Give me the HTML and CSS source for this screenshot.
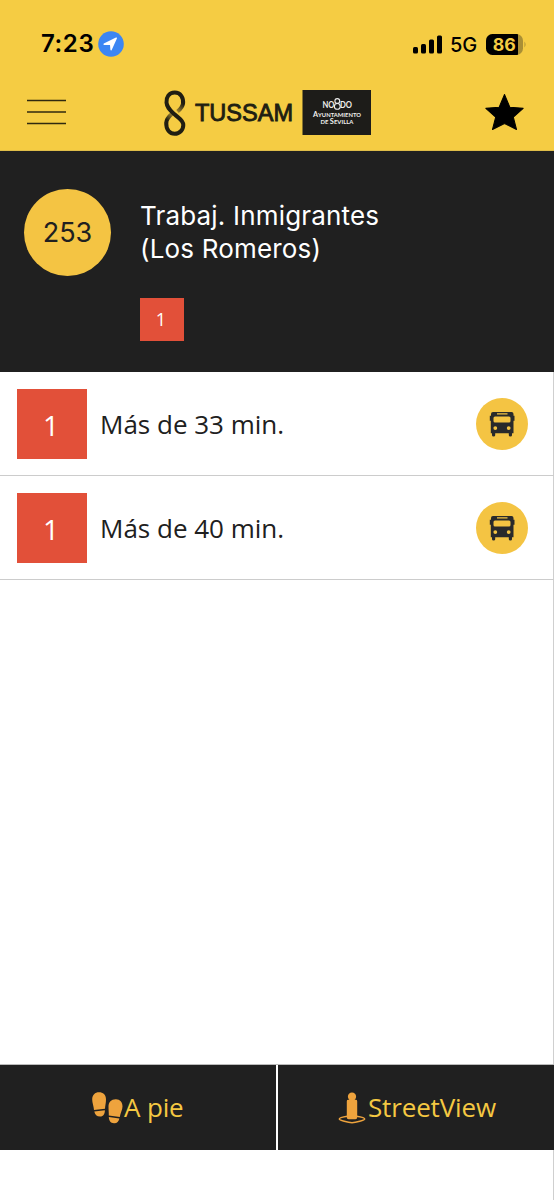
FILE: index.html
```html
<!DOCTYPE html>
<html lang="es">
<head>
<meta charset="utf-8">
<title>TUSSAM</title>
<link rel="stylesheet" href="styles.css">
</head>
<body>
<svg class="defs" width="0" height="0" aria-hidden="true">
  <symbol id="bus" viewBox="0 0 52 52">
    <path fill="#292a2b" fill-rule="evenodd" d="M17 14h18.500q2 0 2 2v1.800h1v5h-1v12.400h-1.500v2q0 1.200-1.600 1.200t-1.600-1.200v-2H19.200v2q0 1.200-1.600 1.200t-1.600-1.200v-2h-1.200V22.800h-1v-5h1.200v-1.800q0-2 2-2zM21 15.200v1.300h10.500v-1.300zM19 18.500q-1.500 0-1.500 1.500v3q0 1.500 1.500 1.500h14q1.500 0 1.500-1.500v-3q0-1.500-1.500-1.500zM19.300 28.200a1.900 1.900 0 1 0 0 3.800 1.900 1.900 0 0 0 0-3.800zM32.700 28.200a1.900 1.900 0 1 0 0 3.800 1.900 1.900 0 0 0 0-3.800z"/>
  </symbol>
</svg>
<main class="screen">
  <header class="top">
    <div class="status">
      <span class="time">7:23</span>
      <svg class="location" viewBox="0 0 26 26"><circle cx="13" cy="13" r="12.800" fill="#3c86f3"/><path d="M5.800 12.500L18 6.600q1.300-.4.900.9L13.700 19q-.8 1.200-1.300-.2l-.4-4.700-5.900-.2q-1.500-.5-.3-1.400z" fill="#fff"/></svg>
      <svg class="signal" viewBox="0 0 30 19"><rect x="0" y="12" width="5" height="6.500" rx="1.500"/><rect x="8" y="9" width="5" height="9.500" rx="1.500"/><rect x="16" y="4.500" width="5" height="14" rx="1.500"/><rect x="24" y=".5" width="5" height="18" rx="1.500"/></svg>
      <span class="network">5G</span>
      <svg class="battery" viewBox="0 0 41 21"><defs><clipPath id="cell"><rect width="37" height="21" rx="6.500"/></clipPath></defs><g clip-path="url(#cell)"><rect width="37" height="21" fill="#a98f35"/><rect width="32" height="21"/></g><path d="M38.500 7.500q2 3 0 6z" fill="#a98f35"/><text x="18.200" y="16.500" text-anchor="middle" textLength="23" lengthAdjust="spacingAndGlyphs">86</text></svg>
    </div>
    <nav class="bar">
      <svg class="menu" viewBox="0 0 39 26"><path d="M0 1.500h39M0 13h39M0 24.500h39" stroke="#30290f" stroke-width="1.600"/></svg>
      <svg class="brand" viewBox="0 0 209 47">
        <defs>
          <linearGradient id="fade-top" gradientUnits="userSpaceOnUse" x1="20" y1="14" x2="14" y2="22"><stop offset="0" stop-color="#201e12"/><stop offset="1" stop-color="#a98d34"/></linearGradient>
          <linearGradient id="fade-bottom" gradientUnits="userSpaceOnUse" x1="4" y1="30" x2="9" y2="23"><stop offset="0" stop-color="#201e12"/><stop offset="1" stop-color="#a98d34"/></linearGradient>
        </defs>
        <g fill="none" stroke="#201e12" stroke-width="4">
          <path d="M20 13.500q-.5 4-5.500 8" stroke="url(#fade-top)"/>
          <path d="M3.200 33q.3-4.500 5.500-9" stroke="url(#fade-bottom)"/>
          <path d="M20 14C20.800 7.500 17.500 2.500 11.700 2.500S3 7.500 3.500 12.500C4 18 7 20 11.500 24.300S20.300 30 20.300 35c0 5-3.800 8.800-8.600 8.800S3 40 3.200 32.500"/>
        </g>
        <text class="wordmark" x="32" y="31.300" textLength="98" lengthAdjust="spacingAndGlyphs">TUSSAM</text>
        <rect x="139.500" y="0" width="68.500" height="45" fill="#1d1c19"/>
        <g class="council"><text x="159.500" y="17.600" font-size="8.600" textLength="12" lengthAdjust="spacingAndGlyphs">NO</text><text x="177" y="17.600" font-size="8.600" textLength="12" lengthAdjust="spacingAndGlyphs">DO</text>
        <text x="150" y="27.300" textLength="48" lengthAdjust="spacingAndGlyphs"><tspan font-size="8">A</tspan><tspan font-size="6.400">YUNTAMIENTO</tspan></text>
        <text x="157.500" y="34.300" textLength="33" lengthAdjust="spacingAndGlyphs"><tspan font-size="6.400">DE </tspan><tspan font-size="8">S</tspan><tspan font-size="6.400">EVILLA</tspan></text></g>
        <g fill="none" stroke="#eee" stroke-width="1.100"><circle cx="174.300" cy="11" r="2.400"/><circle cx="174.300" cy="16.400" r="2.900"/></g>
      </svg>
      <svg class="star" viewBox="0 0 38 37"><path d="M19 1.500l5.200 12.300 13 1.100-9.600 8.700 3.100 11.900L19 29.800 7.300 35.500l3.100-11.900L.8 14.900l13-1.100z" stroke="#000" stroke-linejoin="round"/></svg>
    </nav>
  </header>
  <section class="stop">
    <div class="stop-number">253</div>
    <div class="stop-info">
      <h1 class="stop-name">Trabaj. Inmigrantes<br>(Los Romeros)</h1>
      <span class="line line-small">1</span>
    </div>
  </section>
  <section class="arrivals">
    <div class="arrival"><span class="line">1</span><span class="wait">Más de 33 min.</span><svg class="bus" viewBox="0 0 52 52"><use href="#bus"/></svg></div>
    <div class="arrival"><span class="line">1</span><span class="wait">Más de 40 min.</span><svg class="bus" viewBox="0 0 52 52"><use href="#bus"/></svg></div>
  </section>
  <footer class="actions">
    <div class="action action-walk">
      <svg class="feet" viewBox="0 0 32 32"><g fill="#eea33d"><path d="M.2 7.500C.2 3 3 .3 7 .3s7 2.200 7 7.200c0 3.500-.8 6-1 9.300L2 18C1.700 14 .2 11 .2 7.500zM2.300 19.500l10.600-1.200c0 3.700-1.500 6.300-4.700 6.300-3.500 0-5.300-2-5.900-5.100z"/><path d="M30.500 14.500c0-4.500-2.500-7-6.500-7.200-4.500-.2-7.500 2.700-7.500 7.200 0 3.500.4 6 .3 9l11 1.500C28.300 21 30.500 18 30.500 14.500zM16.800 25l10.600 1.500c-.8 3.200-2.400 5-5.400 4.800-3.500-.2-5-2.500-5.200-6.300z"/></g></svg><span>A pie</span>
    </div>
    <div class="action action-street">
      <svg class="person" viewBox="0 0 28 32"><path d="M9.500 24.200Q1.300 25.500 1.300 27c0 1.300 9 3.700 12.700 3.700s12.700-2.400 12.700-3.700q0-1.500-8.200-2.800" fill="none" stroke="#eea33d" stroke-width="1.500"/><path d="M11.400 7.800a4.100 4.100 0 1 1 5.200 0h1.200q1.400 0 1.400 1.400V25.500q0 1.800-1.800 1.800h-6.800q-1.800 0-1.800-1.800V9.200q0-1.400 1.400-1.400z" fill="#eea33d"/></svg><span>StreetView</span>
    </div>
  </footer>
</main>
</body>
</html>
```
FILE: styles.css
```css
* { box-sizing: border-box; }
body { margin: 0; background: #fff; font-family: "Open Sans", sans-serif; }
svg { display: block; flex: none; }
.defs { position: absolute; }
.screen { display: flex; flex-direction: column; width: 554px; height: 1200px; padding-bottom: 50px; background: linear-gradient(to right, #fff 553px, #cfcfcf 553px); }
.top { height: 151px; background: #f5cc43; border-bottom: 1px solid #dfbd49; font-family: Inter, sans-serif; }
.status { display: flex; align-items: center; height: 88px; padding-left: 41px; }
.time { width: 57px; font-size: 24px; font-weight: 600; letter-spacing: .6px; line-height: 28px; }
.location { width: 26px; height: 26px; }
.signal { width: 30px; height: 19px; margin-left: 289px; }
.network { width: 29px; margin-left: 7px; margin-top: 1px; font-size: 20px; font-weight: 500; letter-spacing: -.1px; }
.battery { width: 41px; height: 21px; margin-left: 7px; }
.battery text { font: 700 17px Inter, sans-serif; fill: #f5cc43; }
.bar { display: flex; align-items: flex-start; padding-left: 27px; }
.menu { width: 39px; height: 26px; margin-top: 11px; }
.brand { width: 209px; height: 47px; margin-left: 97px; margin-top: 2px; }
.wordmark { font: 400 24.5px "Liberation Sans", sans-serif; fill: #201e12; stroke: #201e12; stroke-width: .9px; }
.council { font-family: Lato, sans-serif; font-weight: 700; fill: #f0f0ed; }
.star { width: 39px; height: 38px; margin-left: 113px; margin-top: 5px; }
.stop { display: flex; align-items: flex-start; height: 221px; padding: 38px 0 0 24px; background: #202020; color: #fff; font-family: Inter, sans-serif; }
.stop-number { width: 87px; height: 87px; border-radius: 50%; background: #f4c443; color: #202020; font-size: 27px; line-height: 87px; text-align: center; }
.stop-info { display: flex; flex-direction: column; align-items: flex-start; margin-left: 29px; padding-top: 10px; }
.stop-name { margin: 0 0 33px; font-size: 26px; font-weight: 400; letter-spacing: .18px; line-height: 33px; white-space: nowrap; }
.line { width: 70px; height: 70px; background: #e25039; color: #fff; font-size: 28px; line-height: 73px; text-align: center; padding-right: 2px; }
.line-small { width: 44px; height: 43px; font-family: "Open Sans", sans-serif; font-size: 18px; line-height: 43px; }
.arrivals { flex: 1; color: #202020; }
.arrival { display: flex; align-items: center; height: 104px; padding-left: 17px; border-bottom: 1px solid #ccc; }
.wait { width: 376px; margin-left: 13px; font-size: 26px; line-height: 36px; }
.bus { width: 52px; height: 52px; border-radius: 50%; background: #f4c443; }
.actions { display: flex; gap: 2px; height: 86px; border-top: 1px solid #bbb; background: #fff; }
.action { display: flex; align-items: center; flex: 1; background: #202020; color: #f5c842; font-size: 26px; line-height: 36px; letter-spacing: -.15px; }
.action-walk { flex: none; width: 276px; padding-left: 92px; }
.action-street { padding-left: 60px; }
.action span { margin-bottom: 1px; }
.feet { width: 32px; height: 32px; }
.person { width: 28px; height: 32px; margin-right: 2px; }
```
